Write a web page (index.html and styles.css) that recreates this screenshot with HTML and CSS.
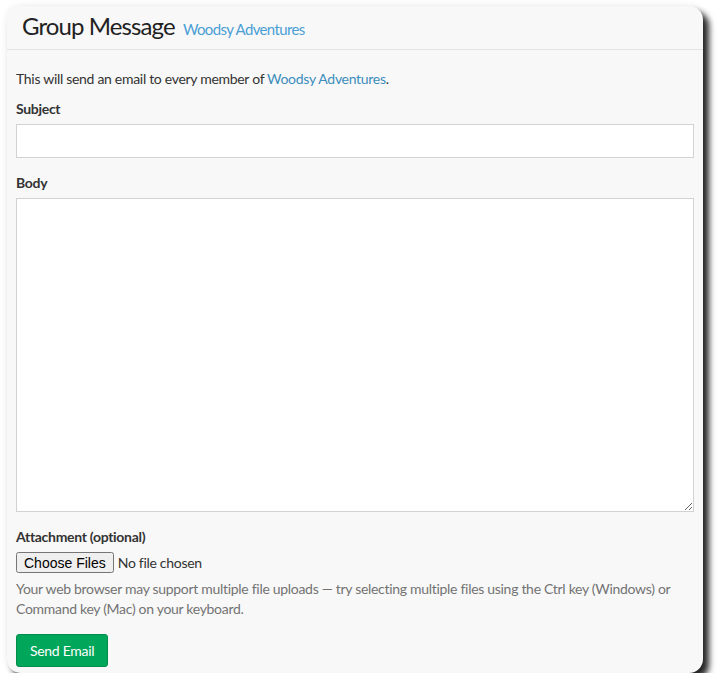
FILE: index.html
```html
<!DOCTYPE html>
<html>
<head>
<meta charset="utf-8">
<link rel="stylesheet" href="styles.css">
</head>
<body>
<div class="card">
  <div class="card-header">
    <h1 class="title">Group Message <a href="#" class="sub">Woodsy Adventures</a></h1>
  </div>
  <div class="card-body">
    <p class="intro">This will send an email to every member of <a href="#">Woodsy Adventures</a>.</p>
    <div class="group">
      <label class="lbl">Subject</label>
      <input type="text" class="field">
    </div>
    <div class="group">
      <label class="lbl">Body</label>
      <textarea class="field area"></textarea>
    </div>
    <div class="group attach">
      <label class="lbl">Attachment (optional)</label>
      <input type="file" multiple class="file">
      <p class="help">Your web browser may support multiple file uploads — try selecting multiple files using the Ctrl key (Windows) or Command key (Mac) on your keyboard.</p>
    </div>
    <button class="btn">Send Email</button>
  </div>
</div>
</body>
</html>
```
FILE: styles.css
```css
html, body { margin: 0; padding: 0; background: #fff; }
body {
  padding: 6px 0 0 7px;
  font-family: "Source Sans Pro", Lato, "Open Sans", sans-serif;
  font-size: 14px;
  letter-spacing: -0.3px;
  color: #333;
}
a { color: #3c8dbc; text-decoration: none; }
.card {
  width: 696px;
  height: 667px;
  box-sizing: border-box;
  background: #f8f8f8;
  border-radius: 14px;
  box-shadow: 6px 6px 6px rgba(0,0,0,0.85), 0 0 8px rgba(0,0,0,0.08);
}
.card-header {
  border-bottom: 1px solid #e4e4e4;
  padding: 0 15px 4px 15px;
  box-sizing: content-box;
  height: 39px;
  display: flex;
  align-items: center;
}
.title {
  margin: 0;
  font-size: 24px;
  font-weight: 400;
  letter-spacing: -0.9px;
  color: #222;
  line-height: 1;
}
.sub { font-size: 15px; margin-left: 3px; letter-spacing: -0.65px; color: #4a9fd5; }
.card-body { padding: 19px 9px 0 9px; }
.intro { margin: 0 0 10px 0; line-height: 20px; }
.group { margin-bottom: 15px; }
.lbl { display: block; font-weight: 700; line-height: 20px; margin-bottom: 5px; }
.field {
  display: block;
  width: 100%;
  box-sizing: border-box;
  height: 34px;
  border: 1px solid #d2d2d2;
  background: #fff;
  margin: 0;
  font-family: inherit;
}
.area { height: 314px; resize: vertical; }
.file { display: block; font-family: inherit; font-size: 14px; letter-spacing: -0.3px; color: #333; margin: 0; }
.file::file-selector-button { font-family: "Liberation Sans", Arial, sans-serif; font-size: 14px; letter-spacing: 0; height: 21px; }
.help { margin: 6px 0 0 0; color: #737373; line-height: 20px; }
.btn {
  background: #00a65a;
  border: 1px solid #008d4c;
  color: #fff;
  border-radius: 3px;
  font-family: inherit;
  font-size: 14px;
  letter-spacing: -0.3px;
  height: 33px;
  padding: 0 13px;
  margin-top: 0;
}
```
